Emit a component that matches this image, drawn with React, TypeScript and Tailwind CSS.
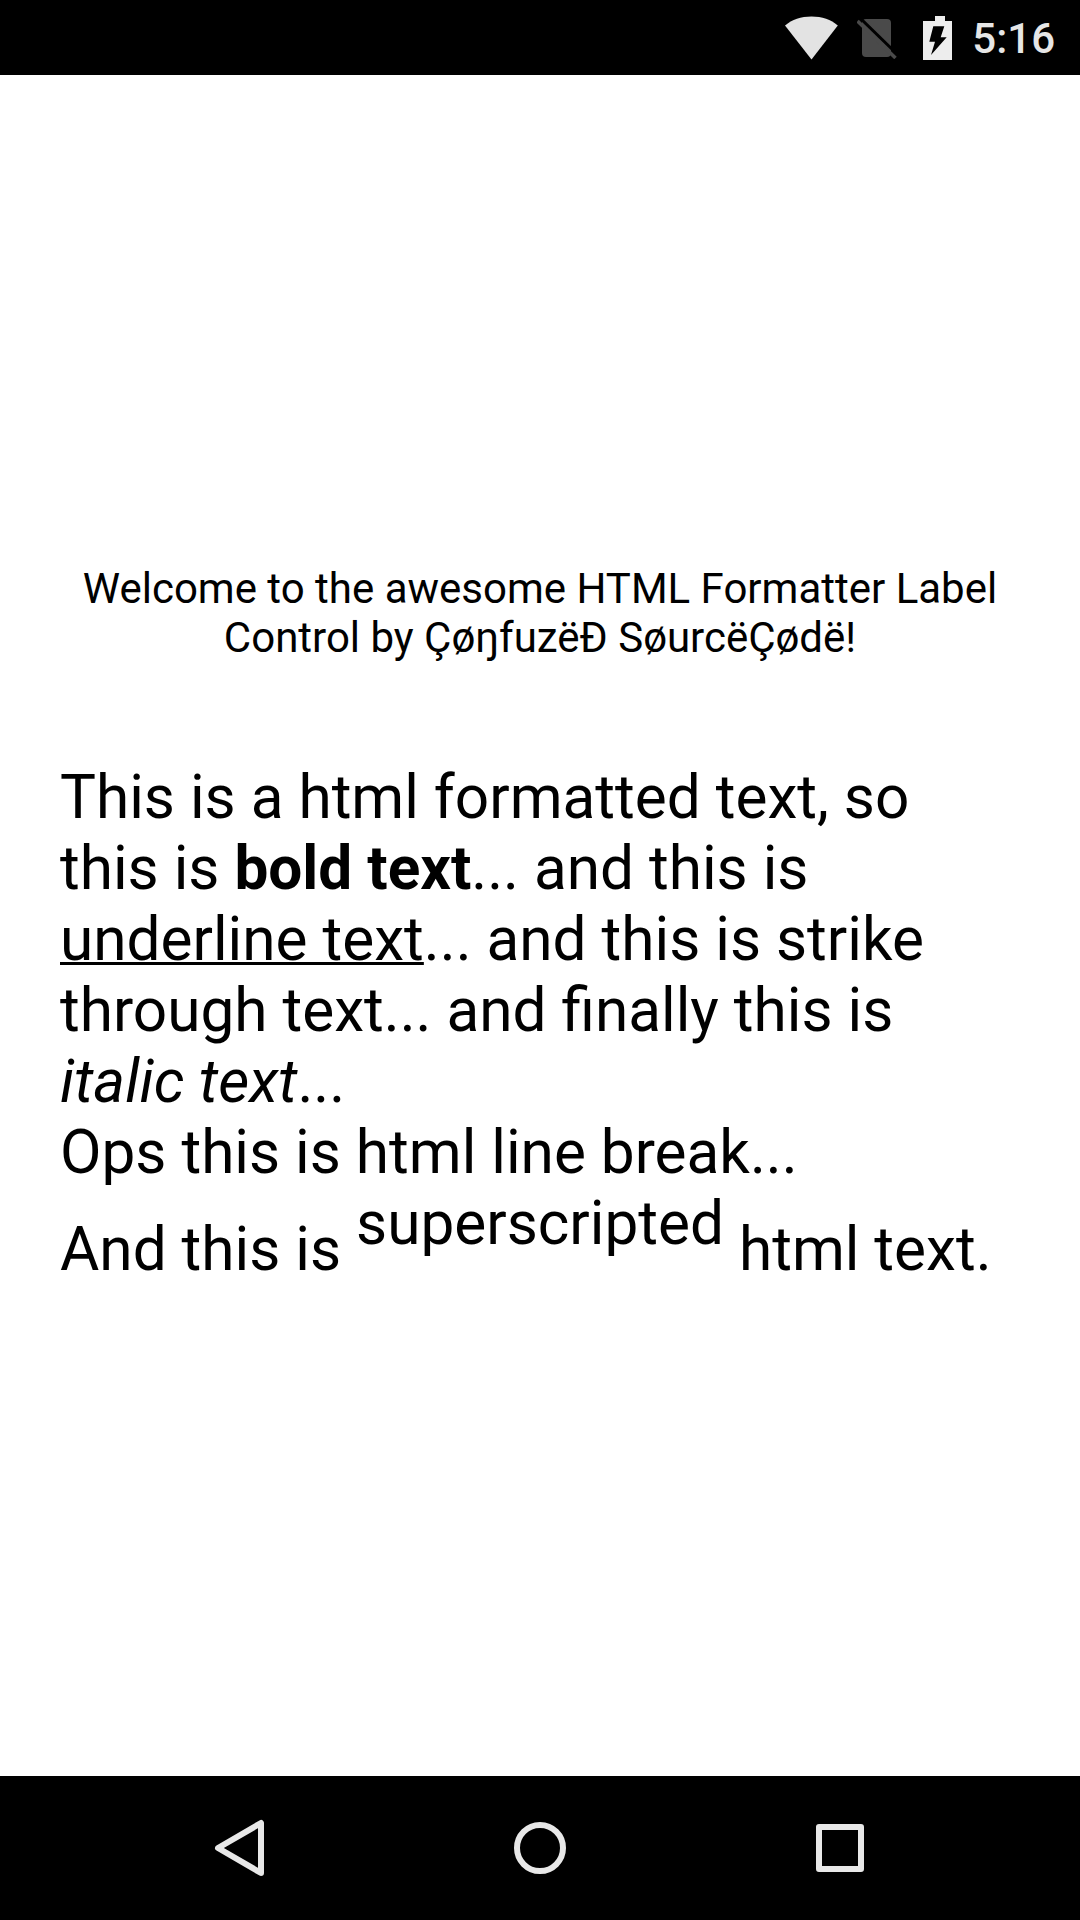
export default function App() {
  return (
    <div className="flex h-[1920px] w-[1080px] flex-col bg-white font-['Roboto',sans-serif] text-black">
      {/* status bar */}
      <div className="flex h-[75px] items-center justify-end bg-black pr-[25px]">
        <svg className="mr-[19px] h-[44px] w-[54px]" viewBox="0 0 54 44">
          <path d="M27.5 43.5 1 9.5C8 3.5 17 .5 27.5 .5S47 3.5 53.8 9.5Z" fill="#e3e3e3" />
        </svg>
        <svg className="mr-[26px] h-[42px] w-[40px]" viewBox="0 0 40 42">
          <path d="M9 2H30Q34 2 34 6V36Q34 40 30 40H9Q5 40 5 36V6Q5 2 9 2Z" fill="#4a4a4a" />
          <path d="M3 1 41 38" stroke="#000" strokeWidth="3" />
          <path d="M0.5 4 38.5 41" stroke="#4a4a4a" strokeWidth="3.5" />
        </svg>
        <svg className="mr-[20px] h-[44px] w-[29px]" viewBox="0 0 29 44">
          <path
            fillRule="evenodd"
            d="M12 0H22V5H29V44H0V5H12ZM10.3 10.3H21.3L17.7 21.3H23.7L8 39 12 25.7H6.3Z"
            fill="#ededed"
          />
        </svg>
        <span className="mt-[2px] text-[42px] leading-none font-medium text-[#e6e6e6]">5:16</span>
      </div>

      {/* content */}
      <div className="flex flex-1 flex-col pt-[489px]">
        <p className="px-[60px] text-center text-[42px] leading-[49px]">
          Welcome to the awesome HTML Formatter Label Control by ÇøŋfuzëÐ SøurcëÇødë!
        </p>
        <p className="mt-[100px] pr-[70px] pl-[60px] text-[60.3px] leading-[71px]">
          This is a html formatted text, so this is <b className="font-bold">bold text</b>... and this is{' '}
          <u className="decoration-[3px]">underline text</u>... and this is strike through text... and finally this is{' '}
          <i>italic text</i>...
          <br />
          Ops this is html line break...
          <br />
          And this is <span className="align-[26px]">superscripted</span> html text.
        </p>
      </div>

      {/* nav bar */}
      <div className="flex h-[144px] items-center bg-black">
        <div className="flex w-[480px] justify-center">
          <svg className="h-[60px] w-[52px]" viewBox="0 0 52 60">
            <path d="M47 5V55L4 30Z" fill="none" stroke="#e8e8e8" strokeWidth="6" strokeLinejoin="round" />
          </svg>
        </div>
        <div className="flex w-[120px] justify-center">
          <div className="h-[52px] w-[52px] rounded-full border-[6px] border-[#e8e8e8]" />
        </div>
        <div className="flex w-[480px] justify-center">
          <div className="h-[48px] w-[48px] rounded-[3px] border-[6px] border-[#e8e8e8]" />
        </div>
      </div>
    </div>
  );
}
